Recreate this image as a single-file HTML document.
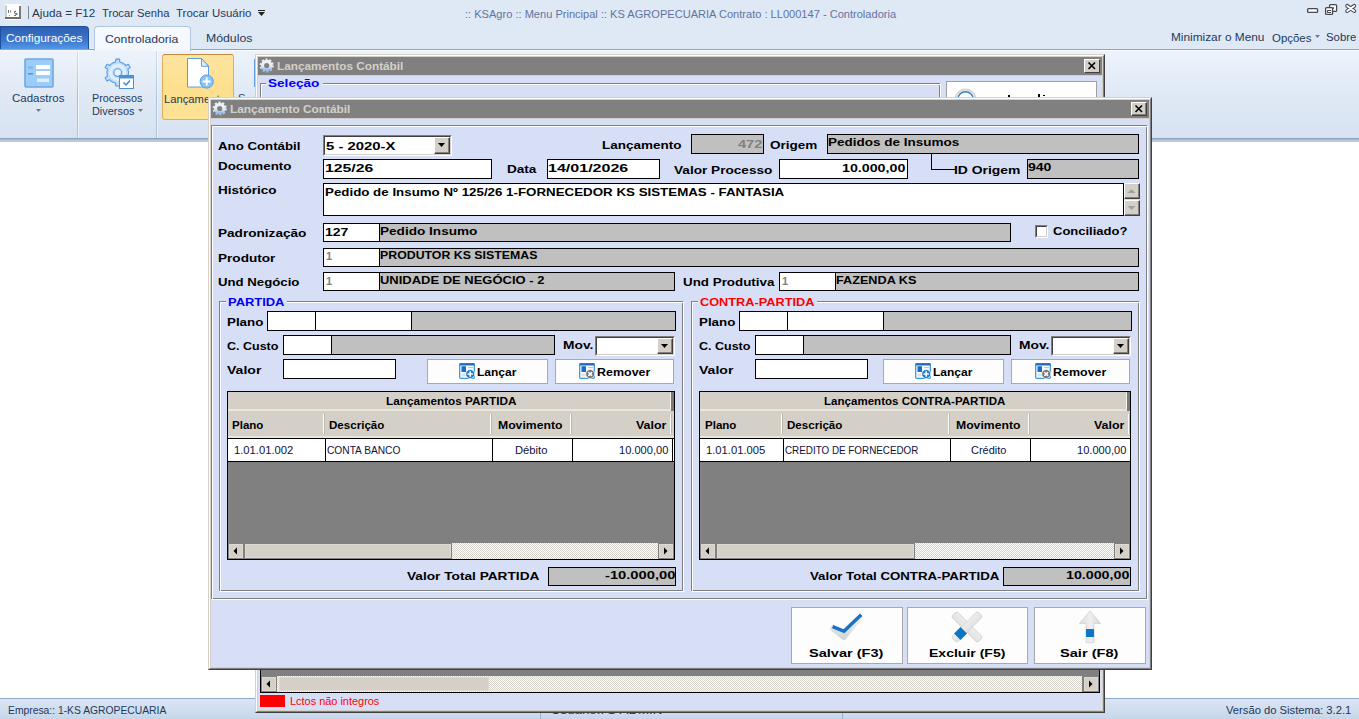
<!DOCTYPE html>
<html><head><meta charset="utf-8"><style>
html,body{margin:0;padding:0;}
body{width:1359px;height:719px;position:relative;overflow:hidden;background:#fff;font-family:"Liberation Sans",sans-serif;}
div,span,svg{position:absolute;box-sizing:border-box;}
.t{white-space:nowrap;line-height:normal;}
</style></head><body>
<div style="left:0px;top:0px;width:1359px;height:49px;background:#dfe9f5;"></div>
<svg style="left:5px;top:4px" width="17" height="17"><rect x="0" y="0" width="16" height="16" fill="#fff"/><path d="M1 1.5V14" stroke="#9a9a9a"/><path d="M15 2V14" stroke="#7a7a7a" stroke-width="2"/><path d="M0 14H16" stroke="#6e6e6e" stroke-width="2"/><path d="M3.5 6V9M5.5 6.5V8.5" stroke="#777" stroke-width="1"/><rect x="4" y="11" width="1" height="1" fill="#999"/><path d="M11 7.2Q9 7.2 9.5 8.6T11.5 10.5Q11 12 9.3 11.3" fill="none" stroke="#444" stroke-width="1"/><rect x="10.5" y="9" width="2" height="1.5" fill="#0aa"/></svg>
<div style="left:28px;top:6px;width:1px;height:13px;background:#7f8794;"></div>
<span class="t" style="left:32.30px;top:7px;font-size:11px;color:#1e395b;transform:scaleX(1.0625);transform-origin:0 0;">Ajuda = F12</span>
<span class="t" style="left:102.30px;top:7px;font-size:11px;color:#1e395b;transform:scaleX(1.0169);transform-origin:0 0;">Trocar Senha</span>
<span class="t" style="left:176.30px;top:7px;font-size:11px;color:#1e395b;transform:scaleX(1.0422);transform-origin:0 0;">Trocar Usuário</span>
<div style="left:258px;top:10px;width:7px;height:1px;background:#222;"></div>
<svg style="left:258px;top:12px" width="7" height="5"><path d="M0 0H7L3.5 4Z" fill="#222"/></svg>
<span class="t" style="left:465.30px;top:8px;font-size:11px;color:#5f73a0;transform:scaleX(1.0058);transform-origin:0 0;">:: KSAgro :: Menu Principal :: KS AGROPECUARIA Contrato : LL000147 - Controladoria</span>
<svg style="left:1305px;top:3px" width="54" height="14"><rect x="2.6" y="5.6" width="10" height="3.8" rx="1" fill="#fff" stroke="#484850" stroke-width="1.3"/><rect x="24.6" y="1.6" width="7" height="6.8" rx="1" fill="#fff" stroke="#484850" stroke-width="1.3"/><rect x="27" y="4.3" width="2" height="1.6" fill="#484850"/><rect x="20.6" y="4.6" width="7" height="6.8" rx="1" fill="#fff" stroke="#484850" stroke-width="1.3"/><rect x="22.6" y="7.5" width="3" height="2" fill="none" stroke="#484850" stroke-width="1"/><path d="M42.2 2.9L49.2 8M49.2 2.9L42.2 8" stroke="#484850" stroke-width="4" stroke-linecap="round"/><path d="M42.2 2.9L49.2 8M49.2 2.9L42.2 8" stroke="#fff" stroke-width="1.9" stroke-linecap="round"/></svg>
<div style="left:0px;top:26px;width:89px;height:24px;background:linear-gradient(#2c5eb0,#3a78cf 60%,#5a9be6);border:1px solid #1f4f9a;border-bottom:none;border-radius:0 4px 0 0;"></div>
<span class="t" style="left:6.30px;top:32px;font-size:11px;color:#fff;transform:scaleX(1.0765);transform-origin:0 0;">Configurações</span>
<span class="t" style="left:206.30px;top:32px;font-size:11px;color:#1e395b;transform:scaleX(1.1156);transform-origin:0 0;">Módulos</span>
<span class="t" style="left:1171.30px;top:31px;font-size:11px;color:#1e395b;transform:scaleX(1.0759);transform-origin:0 0;">Minimizar o Menu</span>
<span class="t" style="left:1272.30px;top:32px;font-size:11px;color:#1e395b;transform:scaleX(1.0386);transform-origin:0 0;">Opções</span>
<svg style="left:1315px;top:35px" width="6" height="4"><path d="M0 0H5L2.5 3Z" fill="#6b7b90"/></svg>
<span class="t" style="left:1326.30px;top:31px;font-size:11px;color:#1e395b;transform:scaleX(1.0349);transform-origin:0 0;">Sobre</span>
<div style="left:0px;top:49px;width:1359px;height:93px;background:linear-gradient(#edf3fb,#dfe9f5 50%,#d6e2f1);border-top:1px solid #8ea3c0;"></div>
<div style="left:0px;top:50px;width:1359px;height:1px;background:#f7faff;"></div>
<div style="left:0px;top:138px;width:1359px;height:1px;background:#8b9ebb;"></div>
<div style="left:0px;top:139px;width:1359px;height:1px;background:#abbcd1;"></div>
<div style="left:0px;top:140px;width:1359px;height:2px;background:#b8cadf;"></div>
<div style="left:94px;top:26px;width:97px;height:25px;background:linear-gradient(#f6f9fd,#f4f8fd);border:1px solid #b3c6df;border-bottom:none;border-radius:4px 4px 0 0;"></div>
<div style="left:95px;top:49px;width:95px;height:2px;background:#f4f8fd;"></div>
<span class="t" style="left:105.30px;top:33px;font-size:11px;color:#1e395b;transform:scaleX(1.1111);transform-origin:0 0;">Controladoria</span>
<div style="left:77px;top:51px;width:1px;height:87px;background:linear-gradient(#d3deec,#aec0d8 50%,#b2c3da);"></div>
<div style="left:78px;top:51px;width:1px;height:87px;background:rgba(255,255,255,0.55);"></div>
<div style="left:156px;top:51px;width:1px;height:87px;background:linear-gradient(#d3deec,#aec0d8 50%,#b2c3da);"></div>
<div style="left:157px;top:51px;width:1px;height:87px;background:rgba(255,255,255,0.55);"></div>
<svg style="left:24px;top:58px" width="30" height="30"><rect x="1" y="1" width="28" height="28" rx="1" fill="#9ccdf8" stroke="#6fa8e0" stroke-width="1.6"/><rect x="12" y="7" width="14" height="4" fill="#fff"/><rect x="12" y="13" width="14" height="4" fill="#fff"/><rect x="13" y="20.5" width="12" height="3.5" fill="#dcedfc"/><rect x="4" y="8.5" width="5" height="2" fill="#7fb2e6"/><rect x="4" y="15" width="5" height="1.6" fill="#5d95d0"/></svg>
<span class="t" style="left:12.30px;top:92px;font-size:11px;color:#1e395b;transform:scaleX(1.0447);transform-origin:0 0;">Cadastros</span>
<svg style="left:36px;top:109px" width="6" height="4"><path d="M0 0H5L2.5 3Z" fill="#6b7b90"/></svg>
<svg style="left:98px;top:52px" width="40" height="40"><path d="M14.97 10.89 L17.64 10.00 L17.81 7.13 L21.59 7.13 L21.76 10.00 L24.43 10.89 L25.74 11.65 L27.85 13.51 L30.42 12.23 L32.31 15.51 L29.91 17.08 L30.47 19.85 L30.47 21.35 L29.91 24.12 L32.31 25.69 L30.42 28.97 L27.85 27.69 L25.74 29.55 L24.43 30.31 L21.76 31.20 L21.59 34.07 L17.81 34.07 L17.64 31.20 L14.97 30.31 L13.66 29.55 L11.55 27.69 L8.98 28.97 L7.09 25.69 L9.49 24.12 L8.93 21.35 L8.93 19.85 L9.49 17.08 L7.09 15.51 L8.98 12.23 L11.55 13.51 L13.66 11.65Z" fill="#bfe0fb" stroke="#5d9be0" stroke-width="1.1" stroke-linejoin="round"/><circle cx="19.7" cy="20.6" r="7" fill="none" stroke="#def0fe" stroke-width="3"/><circle cx="19.7" cy="20.6" r="3.8" fill="#eaf3fb" stroke="#5d9be0" stroke-width="1.1"/><rect x="21.5" y="23.5" width="14" height="13" fill="#fff" stroke="#4f8fd6"/><rect x="21.5" y="23.5" width="14" height="3" fill="#4f8fd6"/><path d="M25.5 30.5L28 33L32 28.5" fill="none" stroke="#3d86d4" stroke-width="1.5"/></svg>
<span class="t" style="left:92.30px;top:92px;font-size:11px;color:#1e395b;transform:scaleX(0.9810);transform-origin:0 0;">Processos</span>
<span class="t" style="left:92.30px;top:105px;font-size:11px;color:#1e395b;transform:scaleX(0.9911);transform-origin:0 0;">Diversos</span>
<svg style="left:138px;top:109px" width="6" height="4"><path d="M0 0H5L2.5 3Z" fill="#6b7b90"/></svg>
<div style="left:162px;top:54px;width:72px;height:66px;background:linear-gradient(#fde5a0,#fddf8e 50%,#fde395);border:1px solid #dfae5a;border-top-color:#c9893a;border-radius:3px;"></div>
<svg style="left:180px;top:54px" width="42" height="38"><path d="M7.5 4.5H21.5L28.5 12V33H7.5Z" fill="#fff" stroke="#5b9ee0"/><path d="M21.5 4.5V12.3H28.5Z" fill="#dcecfb" stroke="#5b9ee0" stroke-linejoin="round"/><circle cx="26.7" cy="27.5" r="6.6" fill="#8cc3f5" stroke="#5b9ee0" stroke-width="1"/><path d="M26.7 23.5V31.5M22.7 27.5H30.7" stroke="#fff" stroke-width="1.8"/></svg>
<span class="t" style="left:164.30px;top:93px;font-size:11px;color:#1e395b;transform:scaleX(1.0198);transform-origin:0 0;">Lançamentos</span>
<span class="t" style="left:238.00px;top:92px;font-size:11px;color:#1e395b;">S</span>
<div style="left:254px;top:59px;width:1px;height:28px;background:#5b9be0;"></div>
<div style="left:0px;top:698px;width:1359px;height:21px;background:linear-gradient(#dbe6f4,#c6d6ea);border-top:1px solid #8eaacb;"></div>
<span class="t" style="left:8.30px;top:704px;font-size:11px;color:#1e395b;transform:scaleX(0.9384);transform-origin:0 0;">Empresa:: 1-KS AGROPECUARIA</span>
<span class="t" style="left:1226.30px;top:704px;font-size:11px;color:#1e395b;transform:scaleX(1.0194);transform-origin:0 0;">Versão do Sistema: 3.2.1</span>
<div style="left:540px;top:700px;width:1px;height:19px;background:#9bb0cb;"></div>
<div style="left:842px;top:700px;width:1px;height:19px;background:#9bb0cb;"></div>
<span class="t" style="left:551.30px;top:704px;font-size:11px;color:#1e395b;transform:scaleX(1.2068);transform-origin:0 0;">Usuário:: 1-ADMIN</span>
<div style="left:255px;top:54px;width:850px;height:659px;background:#d7dff7;border-top:1px solid #d4d0c8;border-left:1px solid #d4d0c8;border-right:1px solid #404040;border-bottom:1px solid #404040;"></div>
<div style="left:256px;top:55px;width:848px;height:657px;border-top:1px solid #fff;border-left:1px solid #fff;border-right:1px solid #808080;border-bottom:1px solid #808080;"></div>
<div style="left:257px;top:56px;width:846px;height:655px;border:1px solid #d4d0c8;"></div>
<div style="left:257px;top:75px;width:846px;height:1px;background:#d4d0c8;"></div>
<div style="left:258px;top:57px;width:844px;height:18px;background:#808080;"></div>
<svg style="left:259px;top:57px" width="16" height="18"><defs><linearGradient id="gg259" x1="0" y1="0" x2="0" y2="1"><stop offset="0" stop-color="#eef2f8"/><stop offset="0.6" stop-color="#e2ebf6"/><stop offset="1" stop-color="#98bbe6"/></linearGradient></defs><circle cx="7.7" cy="8.5" r="6.2" fill="none" stroke="url(#gg259)" stroke-width="1.8" stroke-dasharray="2.1 1.79"/><circle cx="7.7" cy="8.5" r="4.2" fill="none" stroke="url(#gg259)" stroke-width="3.2"/></svg>
<span class="t" style="left:277.30px;top:60px;font-size:11px;color:#d4d0c8;transform:scaleX(1.0712);transform-origin:0 0;font-weight:bold;">Lançamentos Contábil</span>
<div style="left:1084px;top:59px;width:16px;height:14px;background:#d4d0c8;border-top:1px solid #fff;border-left:1px solid #fff;border-right:1px solid #404040;border-bottom:1px solid #404040;"></div>
<svg style="left:1084px;top:59px" width="16" height="14"><path d="M4.5 3.5L11 10M11 3.5L4.5 10" stroke="#000" stroke-width="1.6"/></svg>
<div style="left:260px;top:83px;width:680px;height:60px;border:1px solid #808080;"></div>
<div style="left:261px;top:84px;width:680px;height:60px;border:1px solid #fff;"></div>
<div style="left:266px;top:76px;width:57px;height:14px;background:#d7dff7;"></div>
<span class="t" style="left:268.30px;top:77px;font-size:11px;color:#0000ff;transform:scaleX(1.2348);transform-origin:0 0;font-weight:bold;">Seleção</span>
<div style="left:946px;top:81px;width:151px;height:30px;background:#fff;border:1px solid #a0a0a0;"></div>
<svg style="left:953px;top:87px" width="24" height="16"><circle cx="12.5" cy="12.5" r="10" fill="#fff" stroke="#d8d8d8" stroke-width="2"/><circle cx="12.5" cy="12.5" r="7.8" fill="none" stroke="#2f7fd0" stroke-width="1.4"/></svg>
<div style="left:1008px;top:95px;width:2px;height:3px;background:#000;"></div>
<div style="left:1038px;top:94px;width:2px;height:4px;background:#000;"></div>
<div style="left:1043px;top:95px;width:2px;height:1px;background:#000;"></div>
<div style="left:260px;top:669px;width:840px;height:24px;background:#808080;border-left:1px solid #000;border-right:1px solid #000;border-bottom:1px solid #000;"></div>
<div style="left:277px;top:676px;width:805px;height:16px;background:repeating-conic-gradient(#d6d3cc 0 25%,#fcfcfa 0 50%) 0 0/2px 2px;"></div>
<div style="left:262px;top:677px;width:14px;height:14px;background:#d4d0c8;border:1px solid #dedad3;"></div>
<svg style="left:262px;top:677px" width="14" height="14"><path d="M8 3.5V10.5L4.5 7Z" fill="#000"/></svg>
<div style="left:279px;top:677px;width:210px;height:14px;background:#d4d0c8;border:1px solid #dedad3;"></div>
<div style="left:1084px;top:677px;width:14px;height:14px;background:#d4d0c8;border:1px solid #dedad3;"></div>
<svg style="left:1084px;top:677px" width="14" height="14"><path d="M5 3.5V10.5L8.5 7Z" fill="#000"/></svg>
<div style="left:260px;top:695px;width:25px;height:12px;background:#ff0000;"></div>
<span class="t" style="left:290.30px;top:695px;font-size:11px;color:#ff0000;transform:scaleX(0.9937);transform-origin:0 0;">Lctos não integros</span>
<div style="left:208px;top:97px;width:944px;height:573px;background:#d7dff7;border-top:1px solid #d4d0c8;border-left:1px solid #d4d0c8;border-right:1px solid #404040;border-bottom:1px solid #404040;"></div>
<div style="left:209px;top:98px;width:942px;height:571px;border-top:1px solid #fff;border-left:1px solid #fff;border-right:1px solid #808080;border-bottom:1px solid #808080;"></div>
<div style="left:210px;top:99px;width:940px;height:569px;border:1px solid #d4d0c8;"></div>
<div style="left:210px;top:118px;width:940px;height:1px;background:#d4d0c8;"></div>
<div style="left:211px;top:100px;width:938px;height:18px;background:#808080;"></div>
<svg style="left:212px;top:100px" width="16" height="18"><defs><linearGradient id="gg212" x1="0" y1="0" x2="0" y2="1"><stop offset="0" stop-color="#eef2f8"/><stop offset="0.6" stop-color="#e2ebf6"/><stop offset="1" stop-color="#98bbe6"/></linearGradient></defs><circle cx="7.7" cy="8.5" r="6.2" fill="none" stroke="url(#gg212)" stroke-width="1.8" stroke-dasharray="2.1 1.79"/><circle cx="7.7" cy="8.5" r="4.2" fill="none" stroke="url(#gg212)" stroke-width="3.2"/></svg>
<span class="t" style="left:230.30px;top:103px;font-size:11px;color:#d4d0c8;transform:scaleX(1.0762);transform-origin:0 0;font-weight:bold;">Lançamento Contábil</span>
<div style="left:1131px;top:102px;width:16px;height:14px;background:#d4d0c8;border-top:1px solid #fff;border-left:1px solid #fff;border-right:1px solid #404040;border-bottom:1px solid #404040;"></div>
<div style="left:1132px;top:103px;width:14px;height:12px;border-right:1px solid #808080;border-bottom:1px solid #808080;"></div>
<svg style="left:1131px;top:102px" width="16" height="14"><path d="M4.5 3.5L11 10M11 3.5L4.5 10" stroke="#000" stroke-width="1.6"/></svg>
<div style="left:211px;top:125px;width:936px;height:474px;border:1px solid #808080;"></div>
<div style="left:212px;top:126px;width:936px;height:474px;border:1px solid #fff;"></div>
<span class="t" style="left:218.30px;top:140px;font-size:11px;color:#000;transform:scaleX(1.2040);transform-origin:0 0;font-weight:bold;">Ano Contábil</span>
<div style="left:323px;top:135px;width:129px;height:21px;background:#fff;border-top:1px solid #808080;border-left:1px solid #808080;border-right:1px solid #fff;border-bottom:1px solid #fff;"></div>
<div style="left:324px;top:136px;width:127px;height:19px;border-top:1px solid #404040;border-left:1px solid #404040;border-right:1px solid #d4d0c8;border-bottom:1px solid #d4d0c8;"></div>
<div style="left:434px;top:137px;width:16px;height:17px;background:#d4d0c8;border-top:1px solid #fff;border-left:1px solid #fff;border-right:1px solid #404040;border-bottom:1px solid #404040;"></div>
<div style="left:435px;top:138px;width:14px;height:15px;border-right:1px solid #808080;border-bottom:1px solid #808080;"></div>
<svg style="left:434px;top:137px" width="16" height="17"><path d="M4 6H11L7.5 10Z" fill="#000"/></svg>
<span class="t" style="left:326.30px;top:140px;font-size:11px;color:#000;transform:scaleX(1.3500);transform-origin:0 0;font-weight:bold;">5 - 2020-X</span>
<span class="t" style="left:602.30px;top:139px;font-size:11px;color:#000;transform:scaleX(1.2251);transform-origin:0 0;font-weight:bold;">Lançamento</span>
<div style="left:691px;top:134px;width:73px;height:20px;background:#c0c0c0;border:1px solid #000;"></div>
<span class="t" style="left:738.30px;top:138px;font-size:11px;color:#808080;transform:scaleX(1.3279);transform-origin:0 0;font-weight:bold;">472</span>
<span class="t" style="left:770.30px;top:139px;font-size:11px;color:#000;transform:scaleX(1.2302);transform-origin:0 0;font-weight:bold;">Origem</span>
<div style="left:827px;top:134px;width:312px;height:20px;background:#c0c0c0;border:1px solid #000;"></div>
<span class="t" style="left:828.30px;top:136px;font-size:11px;color:#000;transform:scaleX(1.2277);transform-origin:0 0;font-weight:bold;">Pedidos de Insumos</span>
<span class="t" style="left:218.30px;top:160px;font-size:11px;color:#000;transform:scaleX(1.2132);transform-origin:0 0;font-weight:bold;">Documento</span>
<div style="left:323px;top:159px;width:169px;height:20px;background:#fff;border:1px solid #000;"></div>
<span class="t" style="left:325.30px;top:162px;font-size:11px;color:#000;transform:scaleX(1.4367);transform-origin:0 0;font-weight:bold;">125/26</span>
<span class="t" style="left:507.30px;top:163px;font-size:11px;color:#000;transform:scaleX(1.2330);transform-origin:0 0;font-weight:bold;">Data</span>
<div style="left:547px;top:159px;width:113px;height:20px;background:#fff;border:1px solid #000;"></div>
<span class="t" style="left:548.30px;top:162px;font-size:11px;color:#000;transform:scaleX(1.4585);transform-origin:0 0;font-weight:bold;">14/01/2026</span>
<span class="t" style="left:674.30px;top:164px;font-size:11px;color:#000;transform:scaleX(1.2370);transform-origin:0 0;font-weight:bold;">Valor Processo</span>
<div style="left:779px;top:159px;width:129px;height:20px;background:#fff;border:1px solid #000;"></div>
<span class="t" style="left:842.30px;top:162px;font-size:11px;color:#000;transform:scaleX(1.2939);transform-origin:0 0;font-weight:bold;">10.000,00</span>
<div style="left:931px;top:154px;width:1px;height:16px;background:#000;"></div>
<div style="left:931px;top:169px;width:24px;height:1px;background:#000;"></div>
<span class="t" style="left:954.30px;top:164px;font-size:11px;color:#000;transform:scaleX(1.2625);transform-origin:0 0;font-weight:bold;">ID Origem</span>
<div style="left:1027px;top:159px;width:112px;height:20px;background:#c0c0c0;border:1px solid #000;"></div>
<span class="t" style="left:1028.30px;top:161px;font-size:11px;color:#000;transform:scaleX(1.2735);transform-origin:0 0;font-weight:bold;">940</span>
<span class="t" style="left:218.30px;top:184px;font-size:11px;color:#000;transform:scaleX(1.2246);transform-origin:0 0;font-weight:bold;">Histórico</span>
<div style="left:323px;top:183px;width:801px;height:33px;background:#fff;border:1px solid #000;"></div>
<span class="t" style="left:325.30px;top:186px;font-size:11px;color:#000;transform:scaleX(1.2114);transform-origin:0 0;font-weight:bold;">Pedido de Insumo Nº 125/26 1-FORNECEDOR KS SISTEMAS - FANTASIA</span>
<div style="left:1124px;top:183px;width:16px;height:16px;background:#d4d0c8;border-top:1px solid #fff;border-left:1px solid #fff;border-right:1px solid #404040;border-bottom:1px solid #404040;"></div>
<div style="left:1125px;top:184px;width:14px;height:14px;border-right:1px solid #808080;border-bottom:1px solid #808080;"></div>
<svg style="left:1124px;top:183px" width="15" height="16"><path d="M3.5 10H11.5L7.5 6Z" fill="#a0a0a0"/></svg>
<div style="left:1124px;top:200px;width:16px;height:16px;background:#d4d0c8;border-top:1px solid #fff;border-left:1px solid #fff;border-right:1px solid #404040;border-bottom:1px solid #404040;"></div>
<div style="left:1125px;top:201px;width:14px;height:14px;border-right:1px solid #808080;border-bottom:1px solid #808080;"></div>
<svg style="left:1124px;top:200px" width="15" height="16"><path d="M3.5 6H11.5L7.5 10Z" fill="#a0a0a0"/></svg>
<span class="t" style="left:218.30px;top:227px;font-size:11px;color:#000;transform:scaleX(1.2353);transform-origin:0 0;font-weight:bold;">Padronização</span>
<div style="left:379px;top:223px;width:632px;height:19px;background:#c0c0c0;border:1px solid #000;"></div>
<div style="left:323px;top:223px;width:57px;height:19px;background:#fff;border:1px solid #000;"></div>
<span class="t" style="left:325.30px;top:226px;font-size:11px;color:#000;transform:scaleX(1.2735);transform-origin:0 0;font-weight:bold;">127</span>
<span class="t" style="left:380.30px;top:225px;font-size:11px;color:#000;transform:scaleX(1.2349);transform-origin:0 0;font-weight:bold;">Pedido Insumo</span>
<div style="left:1035px;top:225px;width:13px;height:13px;background:#fff;border-top:1px solid #808080;border-left:1px solid #808080;border-right:1px solid #fff;border-bottom:1px solid #fff;"></div>
<div style="left:1036px;top:226px;width:11px;height:11px;border-top:1px solid #404040;border-left:1px solid #404040;border-right:1px solid #d4d0c8;border-bottom:1px solid #d4d0c8;"></div>
<span class="t" style="left:1053.30px;top:225px;font-size:11px;color:#000;transform:scaleX(1.1815);transform-origin:0 0;font-weight:bold;">Conciliado?</span>
<span class="t" style="left:218.30px;top:252px;font-size:11px;color:#000;transform:scaleX(1.2361);transform-origin:0 0;font-weight:bold;">Produtor</span>
<div style="left:379px;top:248px;width:760px;height:19px;background:#c0c0c0;border:1px solid #000;"></div>
<div style="left:323px;top:248px;width:57px;height:19px;background:#fff;border:1px solid #000;"></div>
<span class="t" style="left:326.00px;top:250px;font-size:11px;color:#808080;font-weight:bold;">1</span>
<span class="t" style="left:380.30px;top:249px;font-size:11px;color:#000;transform:scaleX(1.1212);transform-origin:0 0;font-weight:bold;">PRODUTOR KS SISTEMAS</span>
<span class="t" style="left:218.30px;top:276px;font-size:11px;color:#000;transform:scaleX(1.1998);transform-origin:0 0;font-weight:bold;">Und Negócio</span>
<div style="left:379px;top:272px;width:296px;height:19px;background:#c0c0c0;border:1px solid #000;"></div>
<div style="left:323px;top:272px;width:57px;height:19px;background:#fff;border:1px solid #000;"></div>
<span class="t" style="left:326.00px;top:275px;font-size:11px;color:#808080;font-weight:bold;">1</span>
<span class="t" style="left:380.30px;top:274px;font-size:11px;color:#000;transform:scaleX(1.1796);transform-origin:0 0;font-weight:bold;">UNIDADE DE NEGÓCIO - 2</span>
<span class="t" style="left:683.30px;top:276px;font-size:11px;color:#000;transform:scaleX(1.2156);transform-origin:0 0;font-weight:bold;">Und Produtiva</span>
<div style="left:835px;top:272px;width:304px;height:19px;background:#c0c0c0;border:1px solid #000;"></div>
<div style="left:779px;top:272px;width:57px;height:19px;background:#fff;border:1px solid #000;"></div>
<span class="t" style="left:782.00px;top:275px;font-size:11px;color:#808080;font-weight:bold;">1</span>
<span class="t" style="left:836.30px;top:274px;font-size:11px;color:#000;transform:scaleX(1.1509);transform-origin:0 0;font-weight:bold;">FAZENDA KS</span>
<div style="left:219px;top:301px;width:464px;height:290px;border:1px solid #808080;"></div>
<div style="left:220px;top:302px;width:464px;height:290px;border:1px solid #fff;"></div>
<div style="left:226px;top:295px;width:61px;height:12px;background:#d7dff7;"></div>
<span class="t" style="left:228.30px;top:296px;font-size:11px;color:#0000ff;transform:scaleX(1.1735);transform-origin:0 0;font-weight:bold;">PARTIDA</span>
<div style="left:691px;top:301px;width:448px;height:290px;border:1px solid #808080;"></div>
<div style="left:692px;top:302px;width:448px;height:290px;border:1px solid #fff;"></div>
<div style="left:698px;top:295px;width:119px;height:12px;background:#d7dff7;"></div>
<span class="t" style="left:700.30px;top:296px;font-size:11px;color:#ff0000;transform:scaleX(1.1585);transform-origin:0 0;font-weight:bold;">CONTRA-PARTIDA</span>
<span class="t" style="left:227.30px;top:316px;font-size:11px;color:#000;transform:scaleX(1.2146);transform-origin:0 0;font-weight:bold;">Plano</span>
<div style="left:411px;top:311px;width:265px;height:20px;background:#c0c0c0;border:1px solid #000;"></div>
<div style="left:315px;top:311px;width:97px;height:20px;background:#fff;border:1px solid #000;"></div>
<div style="left:267px;top:311px;width:49px;height:20px;background:#fff;border:1px solid #000;"></div>
<span class="t" style="left:227.30px;top:340px;font-size:11px;color:#000;transform:scaleX(1.1367);transform-origin:0 0;font-weight:bold;">C. Custo</span>
<div style="left:331px;top:335px;width:224px;height:20px;background:#c0c0c0;border:1px solid #000;"></div>
<div style="left:283px;top:335px;width:49px;height:20px;background:#fff;border:1px solid #000;"></div>
<span class="t" style="left:563.30px;top:339px;font-size:11px;color:#000;transform:scaleX(1.2536);transform-origin:0 0;font-weight:bold;">Mov.</span>
<div style="left:595px;top:336px;width:80px;height:20px;background:#fff;border-top:1px solid #808080;border-left:1px solid #808080;border-right:1px solid #fff;border-bottom:1px solid #fff;"></div>
<div style="left:596px;top:337px;width:78px;height:18px;border-top:1px solid #404040;border-left:1px solid #404040;border-right:1px solid #d4d0c8;border-bottom:1px solid #d4d0c8;"></div>
<div style="left:657px;top:338px;width:16px;height:16px;background:#d4d0c8;border-top:1px solid #fff;border-left:1px solid #fff;border-right:1px solid #404040;border-bottom:1px solid #404040;"></div>
<div style="left:658px;top:339px;width:14px;height:14px;border-right:1px solid #808080;border-bottom:1px solid #808080;"></div>
<svg style="left:657px;top:338px" width="16" height="16"><path d="M4 6H11L7.5 10Z" fill="#000"/></svg>
<span class="t" style="left:227.30px;top:364px;font-size:11px;color:#000;transform:scaleX(1.2778);transform-origin:0 0;font-weight:bold;">Valor</span>
<div style="left:283px;top:359px;width:113px;height:20px;background:#fff;border:1px solid #000;"></div>
<div style="left:427px;top:359px;width:121px;height:25px;background:#fdfdfd;border:1px solid #a9a9a9;"></div>
<svg style="left:459px;top:363px" width="17" height="17"><rect x="0.7" y="0.7" width="14.6" height="14.6" rx="1" fill="#fff" stroke="#3a9ae0" stroke-width="1.3"/><rect x="0.5" y="0.3" width="15" height="2.2" fill="#1f6fc0"/><rect x="2.5" y="3.2" width="4.5" height="5.8" fill="#1a6cc8"/><rect x="9" y="4" width="5" height="1.2" fill="#c8c8c8"/><rect x="2.5" y="10.5" width="4" height="3" fill="#e0e0e0"/><circle cx="11.2" cy="11" r="4.5" fill="#1a78d0" stroke="#fff" stroke-width="0.8"/><path d="M11.2 8.3V13.7M8.5 11H13.9" stroke="#fff" stroke-width="1.6"/></svg>
<span class="t" style="left:477.30px;top:366px;font-size:11px;color:#000;transform:scaleX(1.0916);transform-origin:0 0;font-weight:bold;">Lançar</span>
<div style="left:555px;top:359px;width:119px;height:25px;background:#fdfdfd;border:1px solid #a9a9a9;"></div>
<svg style="left:579px;top:363px" width="17" height="17"><rect x="0.7" y="0.7" width="14.6" height="14.6" rx="1" fill="#fff" stroke="#3a9ae0" stroke-width="1.3"/><rect x="0.5" y="0.3" width="15" height="2.2" fill="#1f6fc0"/><rect x="2.5" y="3.2" width="4.5" height="5.8" fill="#1a6cc8"/><rect x="9" y="4" width="5" height="1.2" fill="#c8c8c8"/><rect x="2.5" y="10.5" width="4" height="3" fill="#e0e0e0"/><circle cx="11.2" cy="11" r="4.5" fill="#707070" stroke="#fff" stroke-width="0.8"/><path d="M9.3 9.1L13.1 12.9M13.1 9.1L9.3 12.9" stroke="#fff" stroke-width="1.6"/></svg>
<span class="t" style="left:597.30px;top:366px;font-size:11px;color:#000;transform:scaleX(1.1339);transform-origin:0 0;font-weight:bold;">Remover</span>
<div style="left:227px;top:391px;width:448px;height:169px;background:#808080;border:1px solid #000;"></div>
<div style="left:228px;top:392px;width:446px;height:17px;background:#d4d0c8;"></div>
<div style="left:228px;top:409px;width:446px;height:2px;background:#e9e6dc;"></div>
<div style="left:670px;top:393px;width:1px;height:16px;background:#f4f2ec;"></div>
<div style="left:671px;top:392px;width:3px;height:19px;background:#7a7a7a;"></div>
<div style="left:228px;top:411px;width:446px;height:26px;background:#d4d0c8;"></div>
<div style="left:228px;top:436px;width:446px;height:2px;background:#e9e6dc;"></div>
<span class="t" style="left:385.80px;top:395px;font-size:11px;color:#000;transform:scaleX(1.0683);transform-origin:0 0;font-weight:bold;">Lançamentos PARTIDA</span>
<div style="left:323px;top:414px;width:2px;height:20px;background:#f3f1ea;border-left:1px solid #fff;border-right:1px solid #b9b5aa;"></div>
<div style="left:490px;top:414px;width:2px;height:20px;background:#f3f1ea;border-left:1px solid #fff;border-right:1px solid #b9b5aa;"></div>
<div style="left:570px;top:414px;width:2px;height:20px;background:#f3f1ea;border-left:1px solid #fff;border-right:1px solid #b9b5aa;"></div>
<div style="left:670px;top:414px;width:2px;height:20px;background:#f3f1ea;border-left:1px solid #fff;border-right:1px solid #b9b5aa;"></div>
<span class="t" style="left:232.30px;top:419px;font-size:11px;color:#000;transform:scaleX(1.0478);transform-origin:0 0;font-weight:bold;">Plano</span>
<span class="t" style="left:329.30px;top:419px;font-size:11px;color:#000;transform:scaleX(1.0527);transform-origin:0 0;font-weight:bold;">Descrição</span>
<span class="t" style="left:498.30px;top:419px;font-size:11px;color:#000;transform:scaleX(1.1091);transform-origin:0 0;font-weight:bold;">Movimento</span>
<span class="t" style="left:636.30px;top:419px;font-size:11px;color:#000;transform:scaleX(1.1292);transform-origin:0 0;font-weight:bold;">Valor</span>
<div style="left:228px;top:438px;width:446px;height:24px;background:#fff;border-top:1px solid #000;border-bottom:1px solid #000;"></div>
<div style="left:325px;top:438px;width:1px;height:24px;background:#000;"></div>
<div style="left:492px;top:438px;width:1px;height:24px;background:#000;"></div>
<div style="left:572px;top:438px;width:1px;height:24px;background:#000;"></div>
<div style="left:672px;top:438px;width:1px;height:24px;background:#000;"></div>
<span class="t" style="left:234.30px;top:444px;font-size:11px;color:#10103a;transform:scaleX(1.0208);transform-origin:0 0;">1.01.01.002</span>
<span class="t" style="left:327.30px;top:444px;font-size:11px;color:#10103a;transform:scaleX(0.9260);transform-origin:0 0;">CONTA BANCO</span>
<span class="t" style="left:514.80px;top:444px;font-size:11px;color:#10103a;transform:scaleX(1.0185);transform-origin:0 0;">Débito</span>
<span class="t" style="left:619.30px;top:444px;font-size:11px;color:#10103a;transform:scaleX(1.0082);transform-origin:0 0;">10.000,00</span>
<div style="left:228px;top:543px;width:446px;height:16px;background:#808080;"></div>
<div style="left:452px;top:543px;width:206px;height:16px;background:repeating-conic-gradient(#d6d3cc 0 25%,#fcfcfa 0 50%) 0 0/2px 2px;"></div>
<div style="left:229px;top:544px;width:14px;height:14px;background:#d4d0c8;border:1px solid #dedad3;"></div>
<svg style="left:229px;top:544px" width="14" height="14"><path d="M8 3.5V10.5L4.5 7Z" fill="#000"/></svg>
<div style="left:245px;top:544px;width:206px;height:14px;background:#d4d0c8;border:1px solid #dedad3;"></div>
<div style="left:659px;top:544px;width:14px;height:14px;background:#d4d0c8;border:1px solid #dedad3;"></div>
<svg style="left:659px;top:544px" width="14" height="14"><path d="M5 3.5V10.5L8.5 7Z" fill="#000"/></svg>
<span class="t" style="left:407.30px;top:570px;font-size:11px;color:#000;transform:scaleX(1.2423);transform-origin:0 0;font-weight:bold;">Valor Total PARTIDA</span>
<div style="left:548px;top:567px;width:128px;height:19px;background:#c0c0c0;border:1px solid #000;"></div>
<span class="t" style="left:605.30px;top:569px;font-size:11px;color:#000;transform:scaleX(1.3370);transform-origin:0 0;font-weight:bold;">-10.000,00</span>
<span class="t" style="left:699.30px;top:316px;font-size:11px;color:#000;transform:scaleX(1.2146);transform-origin:0 0;font-weight:bold;">Plano</span>
<div style="left:883px;top:311px;width:249px;height:20px;background:#c0c0c0;border:1px solid #000;"></div>
<div style="left:787px;top:311px;width:97px;height:20px;background:#fff;border:1px solid #000;"></div>
<div style="left:739px;top:311px;width:49px;height:20px;background:#fff;border:1px solid #000;"></div>
<span class="t" style="left:699.30px;top:340px;font-size:11px;color:#000;transform:scaleX(1.1367);transform-origin:0 0;font-weight:bold;">C. Custo</span>
<div style="left:803px;top:335px;width:208px;height:20px;background:#c0c0c0;border:1px solid #000;"></div>
<div style="left:755px;top:335px;width:49px;height:20px;background:#fff;border:1px solid #000;"></div>
<span class="t" style="left:1019.30px;top:339px;font-size:11px;color:#000;transform:scaleX(1.2536);transform-origin:0 0;font-weight:bold;">Mov.</span>
<div style="left:1051px;top:336px;width:80px;height:20px;background:#fff;border-top:1px solid #808080;border-left:1px solid #808080;border-right:1px solid #fff;border-bottom:1px solid #fff;"></div>
<div style="left:1052px;top:337px;width:78px;height:18px;border-top:1px solid #404040;border-left:1px solid #404040;border-right:1px solid #d4d0c8;border-bottom:1px solid #d4d0c8;"></div>
<div style="left:1113px;top:338px;width:16px;height:16px;background:#d4d0c8;border-top:1px solid #fff;border-left:1px solid #fff;border-right:1px solid #404040;border-bottom:1px solid #404040;"></div>
<div style="left:1114px;top:339px;width:14px;height:14px;border-right:1px solid #808080;border-bottom:1px solid #808080;"></div>
<svg style="left:1113px;top:338px" width="16" height="16"><path d="M4 6H11L7.5 10Z" fill="#000"/></svg>
<span class="t" style="left:699.30px;top:364px;font-size:11px;color:#000;transform:scaleX(1.2778);transform-origin:0 0;font-weight:bold;">Valor</span>
<div style="left:755px;top:359px;width:113px;height:20px;background:#fff;border:1px solid #000;"></div>
<div style="left:883px;top:359px;width:121px;height:25px;background:#fdfdfd;border:1px solid #a9a9a9;"></div>
<svg style="left:915px;top:363px" width="17" height="17"><rect x="0.7" y="0.7" width="14.6" height="14.6" rx="1" fill="#fff" stroke="#3a9ae0" stroke-width="1.3"/><rect x="0.5" y="0.3" width="15" height="2.2" fill="#1f6fc0"/><rect x="2.5" y="3.2" width="4.5" height="5.8" fill="#1a6cc8"/><rect x="9" y="4" width="5" height="1.2" fill="#c8c8c8"/><rect x="2.5" y="10.5" width="4" height="3" fill="#e0e0e0"/><circle cx="11.2" cy="11" r="4.5" fill="#1a78d0" stroke="#fff" stroke-width="0.8"/><path d="M11.2 8.3V13.7M8.5 11H13.9" stroke="#fff" stroke-width="1.6"/></svg>
<span class="t" style="left:933.30px;top:366px;font-size:11px;color:#000;transform:scaleX(1.0916);transform-origin:0 0;font-weight:bold;">Lançar</span>
<div style="left:1011px;top:359px;width:119px;height:25px;background:#fdfdfd;border:1px solid #a9a9a9;"></div>
<svg style="left:1035px;top:363px" width="17" height="17"><rect x="0.7" y="0.7" width="14.6" height="14.6" rx="1" fill="#fff" stroke="#3a9ae0" stroke-width="1.3"/><rect x="0.5" y="0.3" width="15" height="2.2" fill="#1f6fc0"/><rect x="2.5" y="3.2" width="4.5" height="5.8" fill="#1a6cc8"/><rect x="9" y="4" width="5" height="1.2" fill="#c8c8c8"/><rect x="2.5" y="10.5" width="4" height="3" fill="#e0e0e0"/><circle cx="11.2" cy="11" r="4.5" fill="#707070" stroke="#fff" stroke-width="0.8"/><path d="M9.3 9.1L13.1 12.9M13.1 9.1L9.3 12.9" stroke="#fff" stroke-width="1.6"/></svg>
<span class="t" style="left:1053.30px;top:366px;font-size:11px;color:#000;transform:scaleX(1.1339);transform-origin:0 0;font-weight:bold;">Remover</span>
<div style="left:699px;top:391px;width:432px;height:169px;background:#808080;border:1px solid #000;"></div>
<div style="left:700px;top:392px;width:430px;height:17px;background:#d4d0c8;"></div>
<div style="left:700px;top:409px;width:430px;height:2px;background:#e9e6dc;"></div>
<div style="left:1126px;top:393px;width:1px;height:16px;background:#f4f2ec;"></div>
<div style="left:1127px;top:392px;width:3px;height:19px;background:#7a7a7a;"></div>
<div style="left:700px;top:411px;width:430px;height:26px;background:#d4d0c8;"></div>
<div style="left:700px;top:436px;width:430px;height:2px;background:#e9e6dc;"></div>
<span class="t" style="left:824.30px;top:395px;font-size:11px;color:#000;transform:scaleX(1.0501);transform-origin:0 0;font-weight:bold;">Lançamentos CONTRA-PARTIDA</span>
<div style="left:781px;top:414px;width:2px;height:20px;background:#f3f1ea;border-left:1px solid #fff;border-right:1px solid #b9b5aa;"></div>
<div style="left:948px;top:414px;width:2px;height:20px;background:#f3f1ea;border-left:1px solid #fff;border-right:1px solid #b9b5aa;"></div>
<div style="left:1028px;top:414px;width:2px;height:20px;background:#f3f1ea;border-left:1px solid #fff;border-right:1px solid #b9b5aa;"></div>
<div style="left:1128px;top:414px;width:2px;height:20px;background:#f3f1ea;border-left:1px solid #fff;border-right:1px solid #b9b5aa;"></div>
<span class="t" style="left:705.30px;top:419px;font-size:11px;color:#000;transform:scaleX(1.0478);transform-origin:0 0;font-weight:bold;">Plano</span>
<span class="t" style="left:787.30px;top:419px;font-size:11px;color:#000;transform:scaleX(1.0527);transform-origin:0 0;font-weight:bold;">Descrição</span>
<span class="t" style="left:956.30px;top:419px;font-size:11px;color:#000;transform:scaleX(1.1091);transform-origin:0 0;font-weight:bold;">Movimento</span>
<span class="t" style="left:1094.30px;top:419px;font-size:11px;color:#000;transform:scaleX(1.1292);transform-origin:0 0;font-weight:bold;">Valor</span>
<div style="left:700px;top:438px;width:430px;height:24px;background:#fff;border-top:1px solid #000;border-bottom:1px solid #000;"></div>
<div style="left:783px;top:438px;width:1px;height:24px;background:#000;"></div>
<div style="left:950px;top:438px;width:1px;height:24px;background:#000;"></div>
<div style="left:1030px;top:438px;width:1px;height:24px;background:#000;"></div>
<span class="t" style="left:706.30px;top:444px;font-size:11px;color:#10103a;transform:scaleX(1.0208);transform-origin:0 0;">1.01.01.005</span>
<span class="t" style="left:785.30px;top:444px;font-size:11px;color:#10103a;transform:scaleX(0.8958);transform-origin:0 0;">CREDITO DE FORNECEDOR</span>
<span class="t" style="left:971.30px;top:444px;font-size:11px;color:#10103a;transform:scaleX(0.9981);transform-origin:0 0;">Crédito</span>
<span class="t" style="left:1077.30px;top:444px;font-size:11px;color:#10103a;transform:scaleX(1.0082);transform-origin:0 0;">10.000,00</span>
<div style="left:700px;top:543px;width:430px;height:16px;background:#808080;"></div>
<div style="left:915px;top:543px;width:199px;height:16px;background:repeating-conic-gradient(#d6d3cc 0 25%,#fcfcfa 0 50%) 0 0/2px 2px;"></div>
<div style="left:701px;top:544px;width:14px;height:14px;background:#d4d0c8;border:1px solid #dedad3;"></div>
<svg style="left:701px;top:544px" width="14" height="14"><path d="M8 3.5V10.5L4.5 7Z" fill="#000"/></svg>
<div style="left:717px;top:544px;width:197px;height:14px;background:#d4d0c8;border:1px solid #dedad3;"></div>
<div style="left:1115px;top:544px;width:14px;height:14px;background:#d4d0c8;border:1px solid #dedad3;"></div>
<svg style="left:1115px;top:544px" width="14" height="14"><path d="M5 3.5V10.5L8.5 7Z" fill="#000"/></svg>
<span class="t" style="left:810.30px;top:570px;font-size:11px;color:#000;transform:scaleX(1.2043);transform-origin:0 0;font-weight:bold;">Valor Total CONTRA-PARTIDA</span>
<div style="left:1003px;top:567px;width:128px;height:19px;background:#c0c0c0;border:1px solid #000;"></div>
<span class="t" style="left:1066.30px;top:569px;font-size:11px;color:#000;transform:scaleX(1.2939);transform-origin:0 0;font-weight:bold;">10.000,00</span>
<div style="left:791px;top:607px;width:112px;height:57px;background:#fdfdfd;border:1px solid #a9a9a9;"></div>
<svg style="left:826px;top:608px" width="42" height="38"><defs><linearGradient id="gc" x1="0" y1="0" x2="0" y2="1"><stop offset="0" stop-color="#f6f6f6"/><stop offset="1" stop-color="#d2d2d2"/></linearGradient></defs><path d="M6.3 17.2L17.8 21L34 5.8L36.9 8.8L19.4 31.2Q18.2 32.6 16.8 31.7L5.3 22.6Q4.2 21.6 4.6 20Z" fill="url(#gc)" stroke="#d9d9d9" stroke-width="0.6"/><path d="M6.6 18.6L18 23.2L35.2 6.8" fill="none" stroke="#1673c6" stroke-width="3.3" stroke-linejoin="miter"/></svg>
<span class="t" style="left:809.30px;top:647px;font-size:11px;color:#000;transform:scaleX(1.3219);transform-origin:0 0;font-weight:bold;">Salvar (F3)</span>
<div style="left:907px;top:607px;width:121px;height:57px;background:#fdfdfd;border:1px solid #a9a9a9;"></div>
<svg style="left:946px;top:606px" width="42" height="42"><defs><linearGradient id="gx" x1="0" y1="0" x2="0" y2="1"><stop offset="0" stop-color="#ededed"/><stop offset="1" stop-color="#e2e2e2"/></linearGradient></defs><g transform="rotate(45 21 21)"><rect x="2.6" y="17.2" width="36.8" height="7.6" rx="2.2" fill="url(#gx)" stroke="#cfcfcf" stroke-width="0.9"/></g><g transform="rotate(-45 21 21)"><rect x="2.6" y="17.2" width="36.8" height="7.6" rx="2.2" fill="url(#gx)" stroke="#cfcfcf" stroke-width="0.9"/></g><g transform="rotate(-45 21 21)"><rect x="3.1" y="17.65" width="35.8" height="6.7" rx="2" fill="url(#gx)"/></g><rect x="10" y="23" width="9.1" height="9.1" fill="#0a76c6" transform="rotate(45 14.6 27.5)"/></svg>
<span class="t" style="left:929.30px;top:647px;font-size:11px;color:#000;transform:scaleX(1.2747);transform-origin:0 0;font-weight:bold;">Excluir (F5)</span>
<div style="left:1034px;top:607px;width:112px;height:57px;background:#fdfdfd;border:1px solid #a9a9a9;"></div>
<svg style="left:1070px;top:606px" width="40" height="42"><defs><linearGradient id="ga" x1="0" y1="0" x2="1" y2="0"><stop offset="0" stop-color="#dcdcdc"/><stop offset="0.5" stop-color="#efefef"/><stop offset="1" stop-color="#d8d8d8"/></linearGradient></defs><path d="M20 5L30.7 17.5H24V35.5Q24 36.8 22.7 36.8H17.3Q16 36.8 16 35.5V17.5H9.3Z" fill="url(#ga)" stroke="#d2d2d2" stroke-width="0.8"/><rect x="16" y="23" width="8" height="8" fill="#0a76c6"/></svg>
<span class="t" style="left:1060.30px;top:647px;font-size:11px;color:#000;transform:scaleX(1.3263);transform-origin:0 0;font-weight:bold;">Sair (F8)</span>
</body></html>
